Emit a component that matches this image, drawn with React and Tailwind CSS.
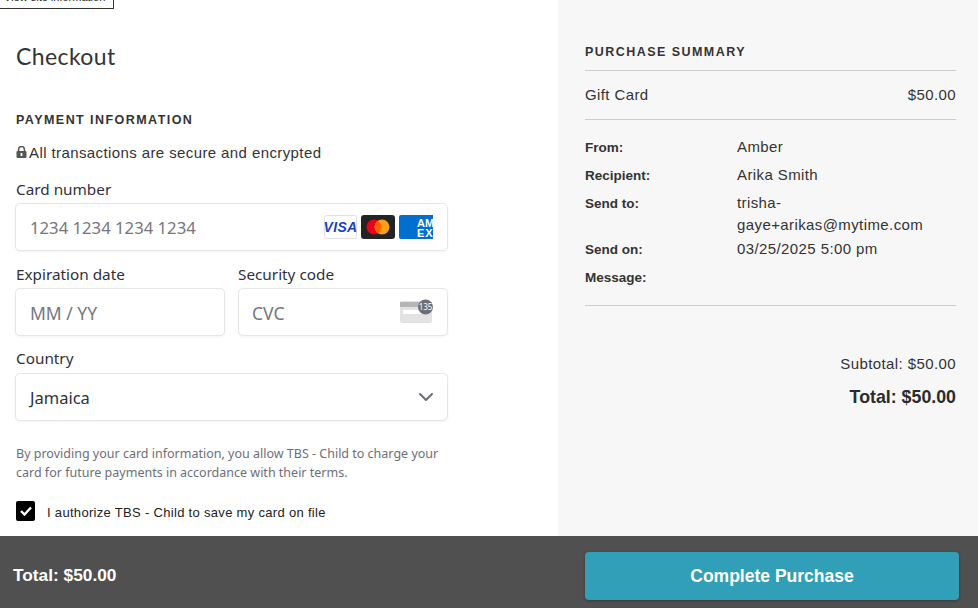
import React from 'react';
import { ChevronDown } from 'lucide-react';

const fieldBox = 'h-[48px] bg-white border border-[#e6e6e6] rounded-[5px] shadow-[0_1px_3px_rgba(0,0,0,0.05)] flex items-center px-[14px]';
const fieldLabel = "font-['Noto_Sans'] text-[15.3px] leading-[20px] text-[#30313d] mb-[4px]";

const LockIcon = () => (
  <svg width="11" height="12" viewBox="0 0 11 12" className="mr-[2px] mb-[2px]">
    <path d="M2.6 5V3.4a2.9 2.9 0 0 1 5.8 0V5" fill="none" stroke="#555" strokeWidth="1.5" />
    <rect x="0.5" y="5" width="10" height="7" rx="1" fill="#555" />
    <rect x="4.6" y="7" width="1.8" height="3" fill="#fff" />
  </svg>
);

const VisaIcon = () => (
  <svg width="33" height="24" viewBox="0 0 33 24">
    <rect x="0.5" y="0.5" width="32" height="23" rx="2" fill="#fff" stroke="#dfe1e6" />
    <text x="16.5" y="17" textAnchor="middle" fontFamily="Liberation Sans" fontSize="14" fontWeight="700" fontStyle="italic" letterSpacing="0.3" fill="#1a3fc8">VISA</text>
  </svg>
);

const MastercardIcon = () => (
  <svg width="34" height="24" viewBox="0 0 34 24">
    <rect width="34" height="24" rx="3" fill="#232323" />
    <circle cx="13" cy="12" r="7.5" fill="#eb001b" />
    <circle cx="21" cy="12" r="7.5" fill="#f79e1b" />
    <path d="M17 5.7a7.5 7.5 0 0 1 0 12.6a7.5 7.5 0 0 1 0-12.6z" fill="#ff5f00" />
  </svg>
);

const AmexIcon = () => (
  <svg width="34" height="24" viewBox="0 0 34 24">
    <path d="M2 0h32v24H2a2 2 0 0 1-2-2V2a2 2 0 0 1 2-2z" fill="#016fd0" />
    <text x="18" y="11.5" fontFamily="Liberation Sans" fontSize="11" fontWeight="700" fill="#fff">AM</text>
    <text x="18" y="21.5" fontFamily="Liberation Sans" fontSize="11" fontWeight="700" letterSpacing="1" fill="#fff">EX</text>
  </svg>
);

const CvcIcon = () => (
  <svg width="33" height="26" viewBox="0 0 33 26">
    <rect x="0" y="2" width="32" height="22" rx="2" fill="#e3e3e3" />
    <rect x="0" y="3" width="32" height="5" fill="#b5b5b5" />
    <rect x="3" y="11" width="26" height="4" fill="#fff" />
    <circle cx="25.5" cy="8" r="7.5" fill="#6d6e78" />
    <text x="25.5" y="11" textAnchor="middle" fontFamily="Noto Sans" fontSize="8" fill="#fff">135</text>
  </svg>
);

const SummaryRow = ({ label, value, className }) => (
  <div className={`flex ${className}`}>
    <div className="w-[152px] shrink-0 text-[13.5px] font-bold leading-[24px] text-[#333]">{label}</div>
    <div className="w-[200px] text-[15px] leading-[22px] tracking-[0.4px] text-[#333]">{value}</div>
  </div>
);

export default function App() {
  return (
    <div className="relative h-[608px] w-[978px] overflow-hidden flex flex-col bg-white font-['Liberation_Sans',sans-serif]">
      <div className="absolute left-[-1px] top-[-14px] border border-[#333] bg-white pl-[4px] pr-[8px] h-[23px] text-[11px] leading-[20px] text-[#222]">
        View site information
      </div>

      <div className="flex-1 flex min-h-0">
        <div className="w-[558px] pl-[16px] pt-[43px]">
          <h1 className="font-['Lato'] text-[23px] leading-[27px] text-[#333] tracking-[0.4px]">Checkout</h1>
          <h2 className="mt-[42px] text-[12.5px] font-bold leading-[16px] tracking-[1.45px] text-[#333]">PAYMENT INFORMATION</h2>
          <div className="mt-[15px] flex items-center text-[15px] leading-[20px] tracking-[0.4px] text-[#333]">
            <LockIcon />
            All transactions are secure and encrypted
          </div>

          <div className="mt-[16px] -ml-[1px] w-[433px] flex flex-col">
            <div className={`${fieldLabel} pl-[1px]`}>Card number</div>
            <div className={`${fieldBox} justify-between`}>
              <span className="mt-[2px] font-['Noto_Sans'] text-[16.7px] text-[#757680]">1234 1234 1234 1234</span>
              <div className="flex gap-[4px]">
                <VisaIcon />
                <MastercardIcon />
                <AmexIcon />
              </div>
            </div>

            <div className="mt-[13px] flex gap-[13px]">
              <div className="flex-1">
                <div className={`${fieldLabel} pl-[1px]`}>Expiration date</div>
                <div className={fieldBox}>
                  <span className="mt-[2px] font-['Noto_Sans'] text-[17.5px] text-[#757680]">MM / YY</span>
                </div>
              </div>
              <div className="flex-1">
                <div className={fieldLabel}>Security code</div>
                <div className={`${fieldBox} justify-between`}>
                  <span className="mt-[2px] -ml-[1px] font-['Noto_Sans'] text-[17.5px] text-[#757680]">CVC</span>
                  <CvcIcon />
                </div>
              </div>
            </div>

            <div className="mt-[12px]">
              <div className={`${fieldLabel} pl-[1px] mb-[5px]`}>Country</div>
              <div className={`${fieldBox} justify-between`}>
                <span className="mt-[2px] font-['Noto_Sans'] text-[16.5px] text-[#30313d]">Jamaica</span>
                <ChevronDown size={24} strokeWidth={2} className="text-[#6d6e78] mr-[-5px]" />
              </div>
            </div>

            <p className="mt-[23px] pl-[1px] font-['Noto_Sans'] text-[12.5px] leading-[19px] text-[#6d6e78]">
              By providing your card information, you allow TBS - Child to charge your card for future payments in accordance with their terms.
            </p>

            <div className="mt-[19px] pl-[1px] flex items-start">
              <div className="w-[19px] h-[20px] rounded-[2px] bg-black flex items-center justify-center">
                <svg width="12" height="10" viewBox="0 0 12 10">
                  <path d="M1 5L4.5 8.5L11 1.5" fill="none" stroke="#fff" strokeWidth="2.4" />
                </svg>
              </div>
              <span className="ml-[12px] mt-[2px] text-[13px] leading-[20px] tracking-[0.31px] text-[#222]">I authorize TBS - Child to save my card on file</span>
            </div>
          </div>
        </div>

        <div className="flex-1 bg-[#f7f7f7] pr-[22px] pl-[27px] pt-[44px]">
          <h2 className="text-[12.5px] font-bold leading-[16px] tracking-[1.45px] text-[#333]">PURCHASE SUMMARY</h2>
          <div className="mt-[10px] border-t border-[#ccc] flex justify-between items-center h-[49px] text-[15px] tracking-[0.4px] text-[#333]">
            <span>Gift Card</span>
            <span>$50.00</span>
          </div>
          <div className="border-t border-b border-[#ccc] pt-[16px] pb-[19px]">
            <SummaryRow label="From:" value="Amber" className="h-[28px]" />
            <SummaryRow label="Recipient:" value="Arika Smith" className="h-[28px]" />
            <SummaryRow label="Send to:" value="trisha-gaye+arikas@mytime.com" className="h-[46px]" />
            <SummaryRow label="Send on:" value="03/25/2025 5:00 pm" className="h-[28px]" />
            <SummaryRow label="Message:" value="" className="h-[20px]" />
          </div>
          <div className="mt-[48px] text-right text-[15px] leading-[20px] tracking-[0.4px] text-[#333]">Subtotal: $50.00</div>
          <div className="mt-[12px] text-right text-[17.8px] font-bold leading-[22px] text-[#2b2b2b]">Total: $50.00</div>
        </div>
      </div>

      <div className="h-[72px] shrink-0 bg-[#505050] flex items-center justify-between pt-[8px] pl-[13px] pr-[19px]">
        <span className="text-[17.3px] font-bold text-white mb-[1px]">Total: $50.00</span>
        <button className="w-[374px] h-[48px] rounded-[4px] bg-[#319fb7] text-[17.5px] font-bold text-white shadow-[0_1px_3px_rgba(0,0,0,0.3)]">
          Complete Purchase
        </button>
      </div>
    </div>
  );
}
